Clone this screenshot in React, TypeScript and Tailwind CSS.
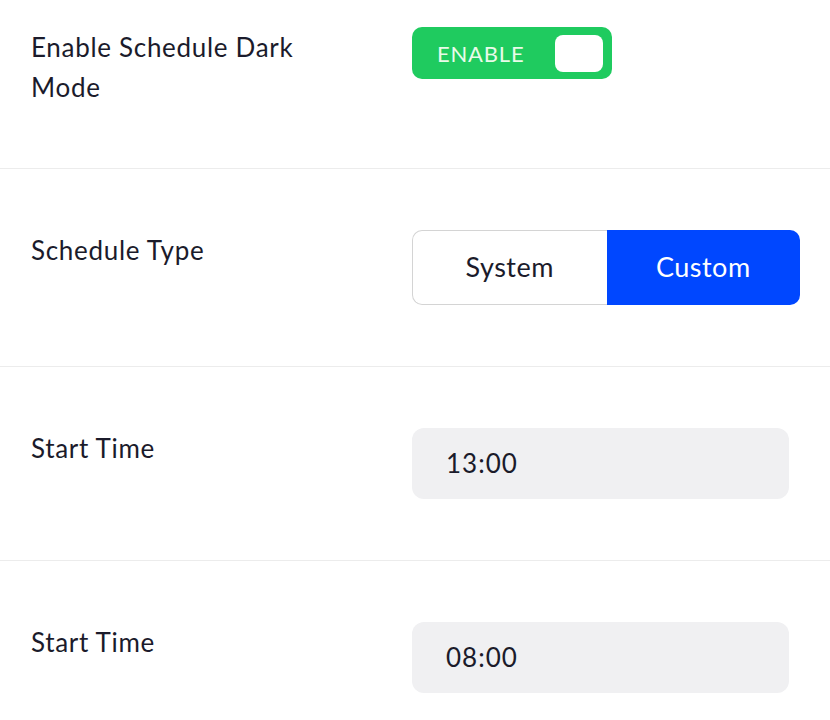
import { useState } from 'react';

const font = { fontFamily: 'Lato, "Open Sans", sans-serif' };

function Row({ label, children }: { label: string; children: React.ReactNode }) {
  return (
    <div className="flex items-start border-b border-[#ececec] pl-[31px] py-[61px] first:pt-[27px]">
      <div className="w-[381px] shrink-0">
        <div className="w-[315px] text-[26px] leading-[40px] tracking-[0.7px] text-[#1b1b2b]">{label}</div>
      </div>
      <div className="flex-1">{children}</div>
    </div>
  );
}

export default function App() {
  const [enabled, setEnabled] = useState(true);
  const [type, setType] = useState<'system' | 'custom'>('custom');

  return (
    <div className="w-[830px] h-[720px] overflow-hidden bg-white" style={font}>
      <Row label="Enable Schedule Dark Mode">
        <button
          onClick={() => setEnabled(!enabled)}
          className="flex h-[52px] w-[200px] items-center justify-between rounded-[10px] bg-[#1fcb5f] pl-[25px] pr-[9px]"
        >
          <span className="text-[22px] tracking-[0.8px] text-[#e9fbe9]">ENABLE</span>
          <span className="h-[37px] w-[48px] rounded-[8px] bg-white" />
        </button>
      </Row>

      <Row label="Schedule Type">
        <div className="flex h-[75px] w-[388px] text-[27px] tracking-[0.5px]">
          <button
            onClick={() => setType('system')}
            className={`flex-1 rounded-l-[10px] ${
              type === 'system' ? 'bg-[#0047ff] text-white' : 'border-[1.5px] border-r-0 border-[#d4d4d4] bg-white text-[#1b1b2b]'
            }`}
          >
            System
          </button>
          <button
            onClick={() => setType('custom')}
            className={`flex-1 rounded-r-[10px] ${
              type === 'custom' ? 'bg-[#0047ff] text-white' : 'border-[1.5px] border-l-0 border-[#d4d4d4] bg-white text-[#1b1b2b]'
            }`}
          >
            Custom
          </button>
        </div>
      </Row>

      <Row label="Start Time">
        <div className="flex h-[71px] w-[377px] items-center rounded-[12px] bg-[#f0f0f2] px-[34px] text-[26px] tracking-[1px] text-[#1b1b2b]">
          13:00
        </div>
      </Row>

      <Row label="Start Time">
        <div className="flex h-[71px] w-[377px] items-center rounded-[12px] bg-[#f0f0f2] px-[34px] text-[26px] tracking-[1px] text-[#1b1b2b]">
          08:00
        </div>
      </Row>
    </div>
  );
}
